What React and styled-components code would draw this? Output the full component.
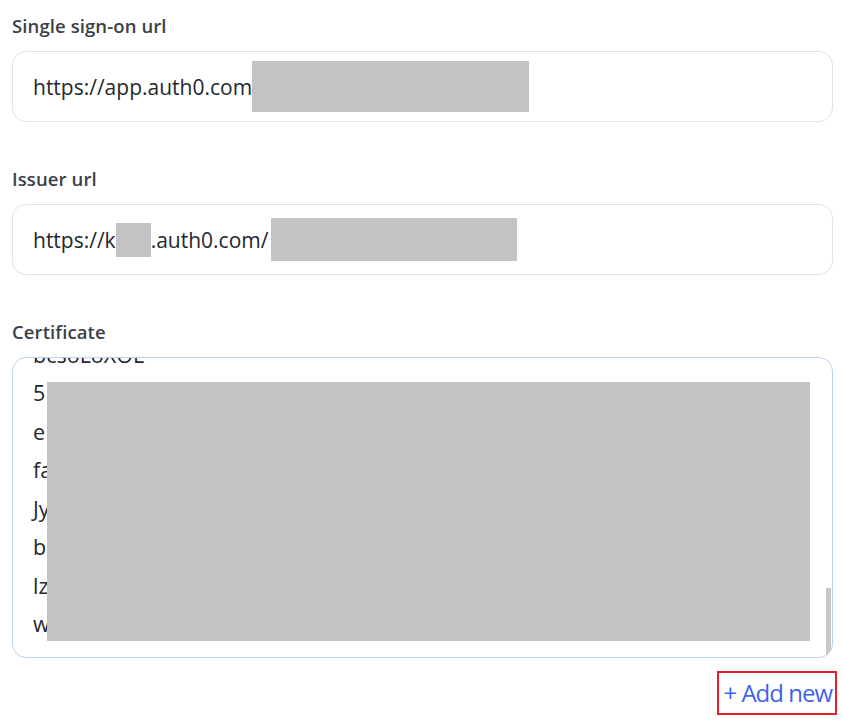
import React from "react";
import styled, { createGlobalStyle } from "styled-components";

const certLines = ["5", "e", "fa", "Jy", "b", "lz", "w."];

const App = () => {
  return (
    <>
      <GlobalStyle />
      <Page>
        <Field>
          <Label>Single sign-on url</Label>
          <InputBox>
            https://app.auth0.com
            <Redact $w={277} $h={51} />
          </InputBox>
        </Field>

        <Field>
          <Label>Issuer url</Label>
          <InputBox>
            https://k
            <Redact $w={35} $h={34} />
            .auth0.com/
            <Redact $w={246} $h={43} $gap={3} />
          </InputBox>
        </Field>

        <Field>
          <Label>Certificate</Label>
          <TextArea>
            <Lines>
              <CutLine>
                <Line>bcsoLoXOL</Line>
              </CutLine>
              {certLines.map((line, i) => (
                <Line key={i}>{line}</Line>
              ))}
            </Lines>
            <BlockRedact />
            <ScrollThumb />
          </TextArea>
        </Field>

        <Footer>
          <AddNew>+ Add new</AddNew>
        </Footer>
      </Page>
    </>
  );
};

const GlobalStyle = createGlobalStyle`
  body {
    margin: 0;
    background: #ffffff;
    font-family: "Open Sans", "Noto Sans", sans-serif;
  }
`;

const Page = styled.div`
  padding: 14px 10px 0 12px;
  display: flex;
  flex-direction: column;
  gap: 45px;
`;

const Field = styled.div`
  display: flex;
  flex-direction: column;
  gap: 13px;
`;

const Label = styled.div`
  font-size: 18.5px;
  line-height: 24px;
  font-weight: 600;
  color: #3b4049;
  letter-spacing: 0.1px;
`;

const InputBox = styled.div`
  box-sizing: border-box;
  height: 71px;
  border: 1.5px solid #dfe2e8;
  border-radius: 14px;
  padding: 0 20px;
  display: flex;
  align-items: center;
  font-size: 21px;
  color: #23272e;
  white-space: pre;
`;

const Redact = styled.span`
  display: inline-block;
  width: ${(p) => p.$w}px;
  height: ${(p) => p.$h}px;
  margin-left: ${(p) => p.$gap || 0}px;
  background: #c3c3c3;
`;

const TextArea = styled.div`
  position: relative;
  box-sizing: border-box;
  height: 301px;
  border: 1.5px solid #bcd0f2;
  border-radius: 14px;
  overflow: hidden;
`;

const Lines = styled.div`
  padding: 0 20px;
  font-size: 21.5px;
  line-height: 38.5px;
  color: #23272e;
`;

const CutLine = styled.div`
  height: 16px;
  overflow: hidden;
  line-height: 38.5px;

  & > div {
    margin-top: -22px;
  }
`;

const Line = styled.div``;

const BlockRedact = styled.div`
  position: absolute;
  left: 34px;
  top: 24px;
  width: 763px;
  height: 259px;
  background: #c3c3c3;
`;

const ScrollThumb = styled.div`
  position: absolute;
  right: 1px;
  top: 230px;
  width: 5px;
  height: 66px;
  background: #c8c8c8;
`;

const Footer = styled.div`
  display: flex;
  justify-content: flex-end;
  margin-top: -32px;
  margin-right: -4px;
`;

const AddNew = styled.div`
  box-sizing: border-box;
  border: 2px solid #e3202e;
  padding: 0 3px 0 4px;
  font-size: 24px;
  line-height: 40px;
  letter-spacing: -1px;
  color: #3f62ee;
  cursor: pointer;
`;

export default App;
